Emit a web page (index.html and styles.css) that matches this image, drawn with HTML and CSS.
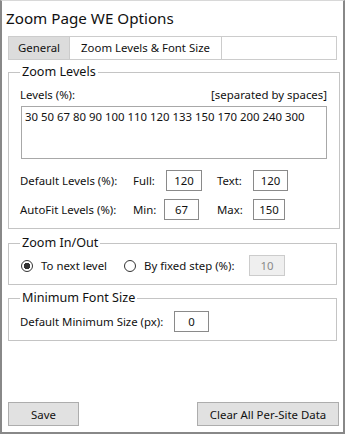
FILE: index.html
```html
<!DOCTYPE html>
<html lang="en">
<head>
    <meta charset="UTF-8">
    <title>Zoom Page WE Options</title>
    <link rel="stylesheet" href="styles.css">
</head>
<body>
    <div class="window">
        <h1 class="title">Zoom Page WE Options</h1>

        <div class="tabs">
            <div class="tab active">General</div>
            <div class="tab">Zoom Levels &amp; Font Size</div>
        </div>

        <fieldset class="group">
            <legend>Zoom Levels</legend>
            <div class="levels-head">
                <span>Levels (%):</span>
                <span>[separated by spaces]</span>
            </div>
            <textarea class="levels" spellcheck="false">30 50 67 80 90 100 110 120 133 150 170 200 240 300</textarea>
            <div class="level-grid">
                <span>Default Levels (%):</span>
                <span>Full:</span>
                <input class="num w36" type="text" value="120">
                <span>Text:</span>
                <input class="num w35" type="text" value="120">

                <span>AutoFit Levels (%):</span>
                <span>Min:</span>
                <input class="num w35 shift" type="text" value="67">
                <span>Max:</span>
                <input class="num w32" type="text" value="150">
            </div>
        </fieldset>

        <fieldset class="group zoomio">
            <legend>Zoom In/Out</legend>
            <div class="radio-row">
                <label class="radio first"><input type="radio" name="step" checked> To next level</label>
                <label class="radio second"><input type="radio" name="step"> By fixed step (%):</label>
                <input class="num w36 disabled" type="text" value="10" disabled>
            </div>
        </fieldset>

        <fieldset class="group minfont">
            <legend>Minimum Font Size</legend>
            <div class="min-row">
                <span class="min-label">Default Minimum Size (px):</span>
                <input class="num w35" type="text" value="0">
            </div>
        </fieldset>

        <div class="buttons">
            <button class="btn save">Save</button>
            <button class="btn clear">Clear All Per-Site Data</button>
        </div>
    </div>
</body>
</html>
```

FILE: styles.css
```css
* {
    box-sizing: border-box;
}

body {
    margin: 0;
    background: #fff;
    font-family: "Noto Sans", "Open Sans", sans-serif;
    font-size: 11.4px;
    color: #111;
}

/* Cadre de la fenetre */
.window {
    width: 345px;
    height: 434px;
    display: flex;
    flex-direction: column;
    padding: 0 6px 6px;
    border-top: 1px solid #d8d8d8;
    border-left: 2px solid #888;
    border-right: 2px solid #888;
    border-bottom: 2px solid #888;
}

.title {
    margin: 0 0 0 -2px;
    height: 35px;
    line-height: 34px;
    font-size: 15.2px;
    font-weight: 400;
}

.tabs {
    display: flex;
    height: 24px;
    border: 1px solid #ccc;
}

.tab {
    line-height: 22px;
    white-space: nowrap;
    text-align: center;
    border-right: 1px solid #ccc;
}

.tab.active {
    background: #dcdcdc;
    width: 61px;
}

.tab + .tab {
    width: 152px;
}

/* Groupes */
.group {
    margin: 3px 0 0;
    padding: 0 12px 8px 11px;
    border: 1px solid #c4c4c4;
}

.group legend {
    padding: 0 2px;
    font-size: 12.6px;
    line-height: 18px;
}

.levels-head {
    display: flex;
    justify-content: space-between;
    margin-top: 6px;
    line-height: 16px;
}

.levels {
    display: block;
    width: 306px;
    height: 53px;
    margin: 3px 0 0 1px;
    padding: 2px 3px;
    border: 1px solid #a8a8a8;
    resize: none;
    font-family: inherit;
    font-size: 11.4px;
    color: #111;
    line-height: 16px;
}

.level-grid {
    display: grid;
    grid-template-columns: 113px 33px 51px 36px auto;
    row-gap: 8px;
    align-items: center;
    margin-top: 11px;
}

.num {
    height: 21px;
    padding: 0;
    border: 1px solid #8a8a8a;
    font-family: inherit;
    font-size: 11.4px;
    color: #111;
    text-align: center;
}

.w36 { width: 36px; }
.w35 { width: 35px; }
.w32 { width: 32px; }

.shift {
    margin-left: -2px;
}

.zoomio {
    margin-top: 5px;
    padding-bottom: 8px;
}

.radio-row {
    display: flex;
    align-items: center;
    margin-top: 3px;
    height: 21px;
}

.radio {
    display: flex;
    align-items: center;
    white-space: nowrap;
}

.radio.first {
    width: 104px;
}

.radio.second {
    width: 125px;
}

.radio input {
    appearance: none;
    width: 12px;
    height: 12px;
    margin: 0 8px 0 1px;
    border: 1px solid #333;
    border-radius: 50%;
    background: #fff;
}

.radio input:checked {
    background: radial-gradient(circle, #333 0 3px, #fff 3.5px);
}

.radio.second input {
    margin-left: 0;
}

.disabled {
    background: #efefef;
    border-color: #ccc;
    color: #8a8a8a;
}

.minfont {
    margin-top: 4px;
}

.min-row {
    display: flex;
    align-items: center;
    margin-top: 4px;
}

.min-label {
    width: 154px;
}

.buttons {
    margin-top: auto;
    display: flex;
    justify-content: space-between;
    margin-right: -2px;
}

.btn {
    height: 24px;
    padding: 0;
    background: #e1e1e1;
    border: 1px solid #adadad;
    font-family: inherit;
    font-size: 11.4px;
    color: #111;
}

.save {
    width: 71px;
}

.clear {
    width: 142px;
}
```
